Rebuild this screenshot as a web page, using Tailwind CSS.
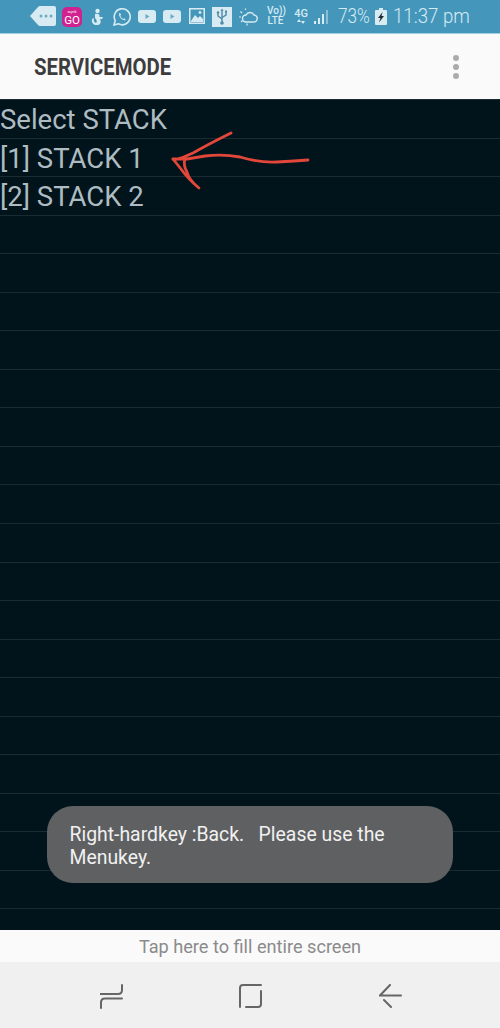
<!DOCTYPE html>
<html>
<head>
<meta charset="utf-8">
<script src="https://cdn.jsdelivr.net/npm/@tailwindcss/browser@4"></script>
</head>
<body class="m-0 bg-[#01131b]">
<div class="relative w-[500px] h-[1028px] overflow-hidden flex flex-col font-['Roboto',sans-serif]">
  <!-- status bar -->
  <div class="h-[34px] shrink-0 bg-[#4497bb] border-b border-[#9fcfe0] flex items-center pl-[30px] text-[#d6eaf2]">
    <svg class="w-[26px] h-[20px] mb-[1px]" viewBox="0 0 26 20"><path d="M0 10 L8 1 Q9 0 10 0 H24 Q26 0 26 2 V18 Q26 20 24 20 H10 Q9 20 8 19 Z" fill="#d8ebf3"/><circle cx="11" cy="10" r="1.5" fill="#6fa9c4"/><circle cx="16" cy="10" r="1.5" fill="#6fa9c4"/><circle cx="21" cy="10" r="1.5" fill="#6fa9c4"/></svg>
    <div class="ml-[6px] w-[20px] h-[20px] rounded-[5px] bg-[#d0218f] flex flex-col items-center justify-end leading-none text-white">
      <span class="text-[4px] leading-[5px]">wynk</span>
      <span class="text-[11.500px] leading-[12px] mb-[1px]">GO</span>
    </div>
    <svg class="ml-[9px] w-[12px] h-[18px]" viewBox="0 0 12 18" fill="#d8ebf3"><circle cx="6.500" cy="3" r="2.200"/><path d="M4 6 Q9 5 8.500 9 L12 9 L11 11 L9 11 Q11 15 7.500 17 H4 Q0 15 1 11 L3 10 Q2 14 5 15 Q7 13 4 10 Z"/></svg>
    <svg class="ml-[10px] w-[18px] h-[18px]" viewBox="0 0 18 18" fill="none" stroke="#d8ebf3" stroke-width="1.600"><path d="M1 17 L2.200 12.600 A8 8 0 1 1 5.400 15.800 Z"/><path d="M6 5.500 Q5.500 8 8 10.500 Q10.500 13 12.700 12 L11.500 10.200 L10.200 11 Q8 10 7.300 7.800 L8 6.600 L7 5 Z" fill="#d8ebf3" stroke="none"/></svg>
    <svg class="ml-[7px] w-[18px] h-[13px]" viewBox="0 0 18 13"><rect width="18" height="13" rx="3" fill="#d8ebf3"/><path d="M7.500 4 L11.500 6.500 L7.500 9 Z" fill="#6fa9c4"/></svg>
    <svg class="ml-[7px] w-[18px] h-[13px]" viewBox="0 0 18 13"><rect width="18" height="13" rx="3" fill="#d8ebf3"/><path d="M7.500 4 L11.500 6.500 L7.500 9 Z" fill="#6fa9c4"/></svg>
    <svg class="ml-[8px] w-[16px] h-[16px] mb-[2px]" viewBox="0 0 16 16"><rect x=".75" y=".75" width="14.500" height="14.500" fill="none" stroke="#d8ebf3" stroke-width="1.500"/><path d="M2 13 L6 7 L9 10 L11 8 L14 11 V14 H2 Z" fill="#d8ebf3"/><circle cx="11" cy="4.500" r="1.400" fill="#d8ebf3"/></svg>
    <svg class="ml-[7px] w-[20px] h-[20px]" viewBox="0 0 20 20"><rect width="20" height="20" fill="#d8ebf3"/><g fill="none" stroke="#4e8aa8" stroke-width="1.400"><path d="M10 3 V16"/><path d="M6 6 V9 L10 12 M14 5 V8 L10 10.500"/></g><path d="M10 1.500 L8.500 4 H11.500 Z" fill="#4e8aa8"/><circle cx="10" cy="16" r="1.800" fill="#4e8aa8"/><circle cx="6" cy="5.500" r="1.200" fill="#4e8aa8"/><rect x="13" y="3.500" width="2" height="2" fill="#4e8aa8"/></svg>
    <svg class="ml-[6px] w-[20px] h-[18px]" viewBox="0 0 20 18" fill="none" stroke="#d8ebf3" stroke-width="1.400"><path d="M8 14 H15.500 A3.500 3.500 0 0 0 16 7 A4.500 4.500 0 0 0 8 7 A3.500 3.500 0 0 0 8 14 Z"/><path d="M1 9 H3 M2.500 3.500 L4 5 M7.500 0.500 V2 M3 14 L4.500 12.500 M9 15.500 V17.500" stroke-width="1.200"/></svg>
    <div class="ml-[9px] w-[17px] flex flex-col text-[10px] leading-[10px] font-medium text-center mb-[1px] whitespace-nowrap"><span>Vo))</span><span>LTE</span></div>
    <div class="ml-[10px] w-[14px] flex flex-col items-center text-[11px] leading-[11px] font-medium mb-[1px]"><span>4G</span><svg class="w-[8px] h-[5px]" viewBox="0 0 8 5"><path d="M2 0 L4 3 H0 Z M6 5 L4 2 H8 Z" fill="#d8ebf3"/></svg></div>
    <svg class="ml-[6px] w-[17px] h-[17px]" viewBox="0 0 17 17"><g fill="#d8ebf3"><rect x="0" y="13" width="2" height="3"/><rect x="4" y="10" width="2" height="6"/><rect x="8" y="6" width="2" height="10"/></g><g fill="#8dbdd3"><rect x="12" y="2" width="2" height="14"/></g></svg>
    <span class="ml-[7px] w-[32px] text-[21px] leading-none font-light whitespace-nowrap scale-x-[0.82] origin-left">73%</span>
    <svg class="ml-[5px] w-[12px] h-[17px]" viewBox="0 0 12 17"><path d="M4 0 H8 V2 H11 Q12 2 12 3 V16 Q12 17 11 17 H1 Q0 17 0 16 V3 Q0 2 1 2 H4 Z" fill="#d8ebf3"/><path d="M7.500 4 L3 10 H5.500 L4 14.500 L9 8 H6.500 Z" fill="#1c2c33"/></svg>
    <span class="ml-[6px] text-[21px] leading-none font-light whitespace-nowrap scale-x-[0.89] origin-left">11:37 pm</span>
  </div>
  <!-- app bar -->
  <div class="h-[65px] shrink-0 bg-[#fafafa] flex items-center justify-between pl-[34px] pr-[41px]">
    <span class="inline-block text-[23.500px] font-bold text-[#3d3d3d] leading-none scale-x-[0.865] origin-left mt-[2px]">SERVICEMODE</span>
    <div class="flex flex-col gap-[3px]">
      <div class="w-[6px] h-[6px] rounded-full bg-[#ababab]"></div>
      <div class="w-[6px] h-[6px] rounded-full bg-[#ababab]"></div>
      <div class="w-[6px] h-[6px] rounded-full bg-[#ababab]"></div>
    </div>
  </div>
  <!-- service list -->
  <div class="h-[831px] shrink-0 bg-[#01131b] border-t border-[#1a2a31] flex flex-col text-[27.500px] leading-[40px] text-[#aebcc2] overflow-hidden">
    <div class="h-[38.560px] shrink-0 border-b border-[#1a2b32] whitespace-nowrap">Select STACK</div>
    <div class="h-[38.560px] shrink-0 border-b border-[#1a2b32] whitespace-nowrap">[1] STACK 1</div>
    <div class="h-[38.560px] shrink-0 border-b border-[#1a2b32] whitespace-nowrap">[2] STACK 2</div>
    <div class="h-[38.560px] shrink-0 border-b border-[#1a2b32]"></div>
    <div class="h-[38.560px] shrink-0 border-b border-[#1a2b32]"></div>
    <div class="h-[38.560px] shrink-0 border-b border-[#1a2b32]"></div>
    <div class="h-[38.560px] shrink-0 border-b border-[#1a2b32]"></div>
    <div class="h-[38.560px] shrink-0 border-b border-[#1a2b32]"></div>
    <div class="h-[38.560px] shrink-0 border-b border-[#1a2b32]"></div>
    <div class="h-[38.560px] shrink-0 border-b border-[#1a2b32]"></div>
    <div class="h-[38.560px] shrink-0 border-b border-[#1a2b32]"></div>
    <div class="h-[38.560px] shrink-0 border-b border-[#1a2b32]"></div>
    <div class="h-[38.560px] shrink-0 border-b border-[#1a2b32]"></div>
    <div class="h-[38.560px] shrink-0 border-b border-[#1a2b32]"></div>
    <div class="h-[38.560px] shrink-0 border-b border-[#1a2b32]"></div>
    <div class="h-[38.560px] shrink-0 border-b border-[#1a2b32]"></div>
    <div class="h-[38.560px] shrink-0 border-b border-[#1a2b32]"></div>
    <div class="h-[38.560px] shrink-0 border-b border-[#1a2b32]"></div>
    <div class="h-[38.560px] shrink-0 border-b border-[#1a2b32]"></div>
    <div class="h-[38.560px] shrink-0 border-b border-[#1a2b32]"></div>
    <div class="h-[38.560px] shrink-0 border-b border-[#1a2b32]"></div>
  </div>
  <!-- footer -->
  <div class="h-[32px] shrink-0 bg-[#fafafa] flex items-center justify-center text-[18.150px] text-[#8b8b8b] leading-none pt-[2px]">Tap here to fill entire screen</div>
  <!-- nav -->
  <div class="h-[66px] shrink-0 bg-[#f0f0f0] relative flex items-start pl-[100px] pt-[22px]">
    <svg class="w-[23px] h-[25px]" viewBox="0 0 23 25" fill="none" stroke="#666" stroke-width="2" stroke-linecap="round"><path d="M0.500 10 H18 Q22 10 22 6 V1"/><path d="M22 14.500 H5 Q1 14.500 1 18.500 V24"/></svg>
    <svg class="ml-[116px] w-[23px] h-[24px]" viewBox="0 0 23 24" fill="none" stroke="#666" stroke-width="2" stroke-linecap="round"><path d="M22 1 H4 Q1 1 1 4 V23"/><path d="M7 23 H19 Q22 23 22 20 V7"/></svg>
    <svg class="ml-[117px] w-[23px] h-[24px]" viewBox="0 0 23 24" fill="none" stroke="#666" stroke-width="2" stroke-linecap="round"><path d="M22 11.500 H1 L11 1"/><path d="M5 16 L12 23"/></svg>
  </div>
  <!-- toast -->
  <div class="absolute left-[47px] top-[806px] w-[406px] h-[77px] rounded-[26px] bg-[#5f6062] pl-[22.500px] pr-[22px] pt-[17px] text-[19.400px] leading-[23px] text-[#f1f1f1] whitespace-pre">Right-hardkey :Back.   Please use the
Menukey.</div>
  <!-- hand-drawn arrow -->
  <svg class="absolute left-[165px] top-[120px] w-[150px] h-[75px]" viewBox="0 0 150 75" fill="none" stroke="#e2473a" stroke-width="2.800" stroke-linecap="round" stroke-linejoin="round">
    <path d="M66 13 L62 15 Q42 25 28 33 Q18 38 9 40 L8 39 H22 L40 36 Q58 34 75 37 Q95 43 112 42 Q130 41 143 40"/>
    <path d="M8 39 L16 49 Q24 60 34 68 Q24 60 22 52 Q18 46 20 38"/>
  </svg>
</div>
</body>
</html>
